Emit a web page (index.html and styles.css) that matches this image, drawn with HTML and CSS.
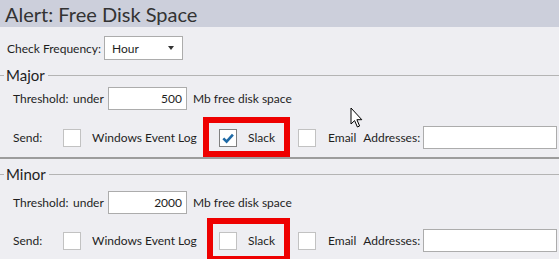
FILE: index.html
```html
<!DOCTYPE html>
<html>
<head>
<meta charset="utf-8">
<link rel="stylesheet" href="styles.css">
</head>
<body>
<div class="page">
  <div class="header"><span class="title">Alert: Free Disk Space</span></div>
  <div class="freq-row">
    <span class="label">Check Frequency:</span>
    <div class="select"><span>Hour</span><span class="caret"></span></div>
  </div>

  <div class="group major">
    <div class="group-head"><span class="tick"></span><span class="legend">Major</span><span class="rule"></span></div>
    <div class="thr-row">
      <span class="lbl-thr">Threshold:</span><span class="lbl-under">under</span>
      <div class="num">500</div>
      <span class="unit">Mb free disk space</span>
    </div>
    <div class="send-row">
      <span class="lbl-send">Send:</span>
      <div class="opt opt-win"><span class="cb"></span><span class="opt-text">Windows Event Log</span></div>
      <div class="opt opt-slack"><span class="cb checked"><svg viewBox="0 0 18 18" width="18" height="18"><path d="M4.3 9.3 L7.6 12.6 L13.9 5.6" fill="none" stroke="#1f6aa6" stroke-width="2.6"/></svg></span><span class="opt-text">Slack</span><span class="mark mark1"></span></div>
      <div class="opt opt-email"><span class="cb"></span><span class="opt-text">Email</span><span class="addr">Addresses:</span><div class="addr-box"></div></div>
    </div>
  </div>

  <div class="divider"></div>

  <div class="group minor">
    <div class="group-head"><span class="tick"></span><span class="legend">Minor</span><span class="rule"></span></div>
    <div class="thr-row">
      <span class="lbl-thr">Threshold:</span><span class="lbl-under">under</span>
      <div class="num">2000</div>
      <span class="unit">Mb free disk space</span>
    </div>
    <div class="send-row">
      <span class="lbl-send">Send:</span>
      <div class="opt opt-win"><span class="cb"></span><span class="opt-text">Windows Event Log</span></div>
      <div class="opt opt-slack"><span class="cb"></span><span class="opt-text">Slack</span><span class="mark mark2"></span></div>
      <div class="opt opt-email"><span class="cb"></span><span class="opt-text">Email</span><span class="addr">Addresses:</span><div class="addr-box"></div></div>
    </div>
  </div>

  <svg class="cursor" width="14" height="22" viewBox="0 0 14 22"><path d="M1 1 L1 17 L4.6 13.6 L7.4 20 L9.6 19 L6.9 12.7 L11.8 12.7 Z" fill="#fff" stroke="#000" stroke-width="1" stroke-linejoin="miter"/></svg>
</div>
</body>
</html>
```
FILE: styles.css
```css
* { box-sizing: border-box; }
html, body { margin: 0; padding: 0; }
body {
  background: #eeeef2;
  font-family: "Lato", "Liberation Sans", sans-serif;
  font-size: 12px;
  color: #1e1e1e;
  width: 559px;
  height: 259px;
  overflow: hidden;
}
.page { position: relative; width: 559px; height: 259px; }
.header {
  height: 27px;
  background: #cccfdb;
  display: flex;
  align-items: center;
  padding-left: 5px;
}
.title { font-size: 20px; color: #333333; }

.freq-row {
  margin-top: 9px;
  height: 24px;
  display: flex;
  align-items: center;
  padding-left: 7px;
}
.freq-row .label { width: 97px; }
.select {
  width: 79px; height: 24px;
  background: #fff;
  border: 1px solid #acacac;
  display: flex; align-items: center; justify-content: space-between;
  padding: 0 8px 0 7px;
}
.caret {
  width: 0; height: 0;
  border-left: 3.5px solid transparent;
  border-right: 3.5px solid transparent;
  border-top: 4px solid #333;
}

.group-head {
  height: 16px;
  display: flex;
  align-items: center;
}
.tick { width: 4px; height: 1px; background: #b4b4b4; }
.legend { font-size: 15px; line-height: 16px; padding: 0 3px 0 2px; color: #1e1e1e; }
.rule { flex: 1; height: 1px; background: #b4b4b4; }
.major { margin-top: 7px; }
.minor { margin-top: 7px; }

.thr-row {
  height: 23px;
  display: flex;
  align-items: center;
  padding-left: 13px;
  margin-top: 4px;
}
.minor .thr-row { margin-top: 9px; }
.lbl-thr { width: 60px; }
.lbl-under { width: 35px; }
.num {
  width: 79px; height: 23px;
  background: #fff;
  border: 1px solid #acacac;
  text-align: right;
  padding: 3px 4px 0 0;
}
.unit { margin-left: 6px; }

.send-row {
  height: 23px;
  display: flex;
  align-items: center;
  padding-left: 13px;
  margin-top: 16px;
}
.minor .send-row { margin-top: 15px; }
.lbl-send { width: 50px; }
.opt { display: flex; align-items: center; position: relative; height: 23px; }
.opt-win { width: 156px; }
.opt-slack { width: 79px; }
.cb {
  width: 18px; height: 18px;
  background: #fff;
  border: 1px solid #c2c2c2;
  display: block;
}
.cb.checked { border-color: #808080; }
.cb svg { display: block; margin: -1px; }
.opt-text { margin-left: 11px; }
.opt-email .opt-text { margin-left: 12px; }
.addr { margin-left: 7px; width: 60px; }
.addr-box {
  width: 134px; height: 23px;
  background: #fff;
  border: 1px solid #acacac;
}

.divider {
  margin-top: 8px;
  height: 2px;
  background: #9c9c9c;
}

.mark {
  position: absolute;
  border: 6px solid #ee0000;
  pointer-events: none;
}
.mark1 { left: -16px; top: -9px; width: 87px; height: 40px; }
.mark2 { left: -12px; top: -11px; width: 83px; height: 44px; }

.cursor { position: absolute; left: 350px; top: 107px; }
```
